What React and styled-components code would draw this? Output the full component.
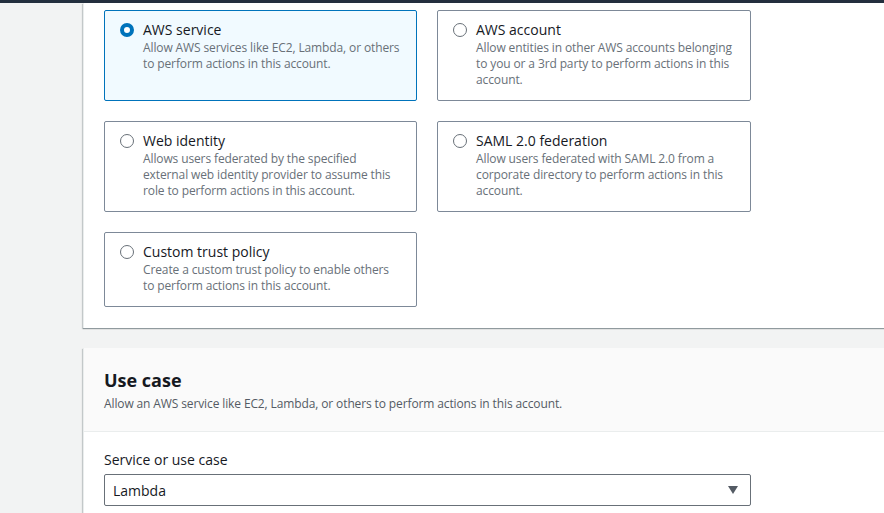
import React from "react";
import styled, { createGlobalStyle } from "styled-components";

const Global = createGlobalStyle`
  html, body { margin: 0; padding: 0; }
  body {
    background: #f2f3f3;
    font-family: "Open Sans", "Noto Sans", Arial, sans-serif;
    color: #16191f;
    overflow: hidden;
    width: 884px;
    height: 513px;
  }
`;

const TopBar = styled.div`
  height: 3px;
  background: #232f3e;
`;

const Page = styled.div`
  display: grid;
  grid-template-columns: 83px 1fr;
`;

const Side = styled.div`
  background: #f2f3f3;
`;

const Main = styled.div`
  display: flex;
  flex-direction: column;
  gap: 20px;
  margin-right: -20px;
`;

const Card = styled.section`
  background: #fff;
  border-left: 1px solid #eaeded;
  box-shadow: 0 1px 1px 0 rgba(0, 28, 36, 0.3), -1px 1px 1px 0 rgba(0, 28, 36, 0.15);
`;

const TileBody = styled.div`
  padding: 7px 20px 21px 20px;
`;

const TileGrid = styled.div`
  display: grid;
  grid-template-columns: 313px 314px;
  column-gap: 20px;
  row-gap: 20px;
`;

const Tile = styled.label`
  display: flex;
  align-items: flex-start;
  gap: 9px;
  padding: 9px 15px 12px 15px;
  border: 1px solid ${(p) => (p.$selected ? "#0073bb" : "#7d8998")};
  border-radius: 2px;
  background: ${(p) => (p.$selected ? "#f1faff" : "#fff")};
  cursor: pointer;
`;

const Radio = styled.span`
  flex: none;
  box-sizing: border-box;
  width: 14px;
  height: 14px;
  margin-top: 3px;
  border-radius: 50%;
  border: ${(p) => (p.$checked ? "4px solid #0073bb" : "1.5px solid #687078")};
  background: #fff;
`;

const TileText = styled.div`
  display: flex;
  flex-direction: column;
`;

const TileTitle = styled.span`
  font-size: 14px;
  line-height: 20px;
  color: #16191f;
`;

const TileDesc = styled.span`
  font-size: 12px;
  line-height: 16px;
  letter-spacing: -0.12px;
  color: #687078;
`;

const CardHeader = styled.header`
  background: #fafafa;
  border-bottom: 1px solid #eaeded;
  padding: 19px 20px 19px 20px;
`;

const HeaderTitle = styled.h2`
  margin: 0;
  font-size: 18px;
  line-height: 26px;
  font-weight: 700;
  color: #16191f;
`;

const HeaderDesc = styled.p`
  margin: 3px 0 0;
  font-size: 12px;
  line-height: 16px;
  letter-spacing: -0.12px;
  color: #545b64;
`;

const CardBody = styled.div`
  padding: 18px 20px 20px 20px;
`;

const FieldLabel = styled.div`
  font-size: 14px;
  line-height: 20px;
  color: #16191f;
  margin-bottom: 4px;
`;

const Select = styled.div`
  width: 647px;
  box-sizing: border-box;
  height: 32px;
  display: flex;
  align-items: center;
  justify-content: space-between;
  padding: 0 12px 0 8px;
  border: 1px solid #687078;
  border-radius: 2px;
  background: #fff;
  font-size: 14px;
  color: #16191f;
`;

const Caret = styled.svg`
  width: 10px;
  height: 8px;
  fill: #545b64;
`;

const options = [
  { title: "AWS service", desc: "Allow AWS services like EC2, Lambda, or others to perform actions in this account.", selected: true },
  { title: "AWS account", desc: "Allow entities in other AWS accounts belonging to you or a 3rd party to perform actions in this account." },
  { title: "Web identity", desc: "Allows users federated by the specified external web identity provider to assume this role to perform actions in this account." },
  { title: "SAML 2.0 federation", desc: "Allow users federated with SAML 2.0 from a corporate directory to perform actions in this account." },
  { title: "Custom trust policy", desc: "Create a custom trust policy to enable others to perform actions in this account." },
];

export default function App() {
  return (
    <>
      <Global />
      <TopBar />
      <Page>
        <Side />
        <Main>
          <Card>
            <TileBody>
              <TileGrid>
                {options.map((o) => (
                  <Tile key={o.title} $selected={o.selected}>
                    <Radio $checked={o.selected} />
                    <TileText>
                      <TileTitle>{o.title}</TileTitle>
                      <TileDesc>{o.desc}</TileDesc>
                    </TileText>
                  </Tile>
                ))}
              </TileGrid>
            </TileBody>
          </Card>
          <Card>
            <CardHeader>
              <HeaderTitle>Use case</HeaderTitle>
              <HeaderDesc>Allow an AWS service like EC2, Lambda, or others to perform actions in this account.</HeaderDesc>
            </CardHeader>
            <CardBody>
              <FieldLabel>Service or use case</FieldLabel>
              <Select>
                <span>Lambda</span>
                <Caret viewBox="0 0 10 8">
                  <path d="M0 0 H10 L5 8 Z" />
                </Caret>
              </Select>
            </CardBody>
          </Card>
        </Main>
      </Page>
    </>
  );
}
